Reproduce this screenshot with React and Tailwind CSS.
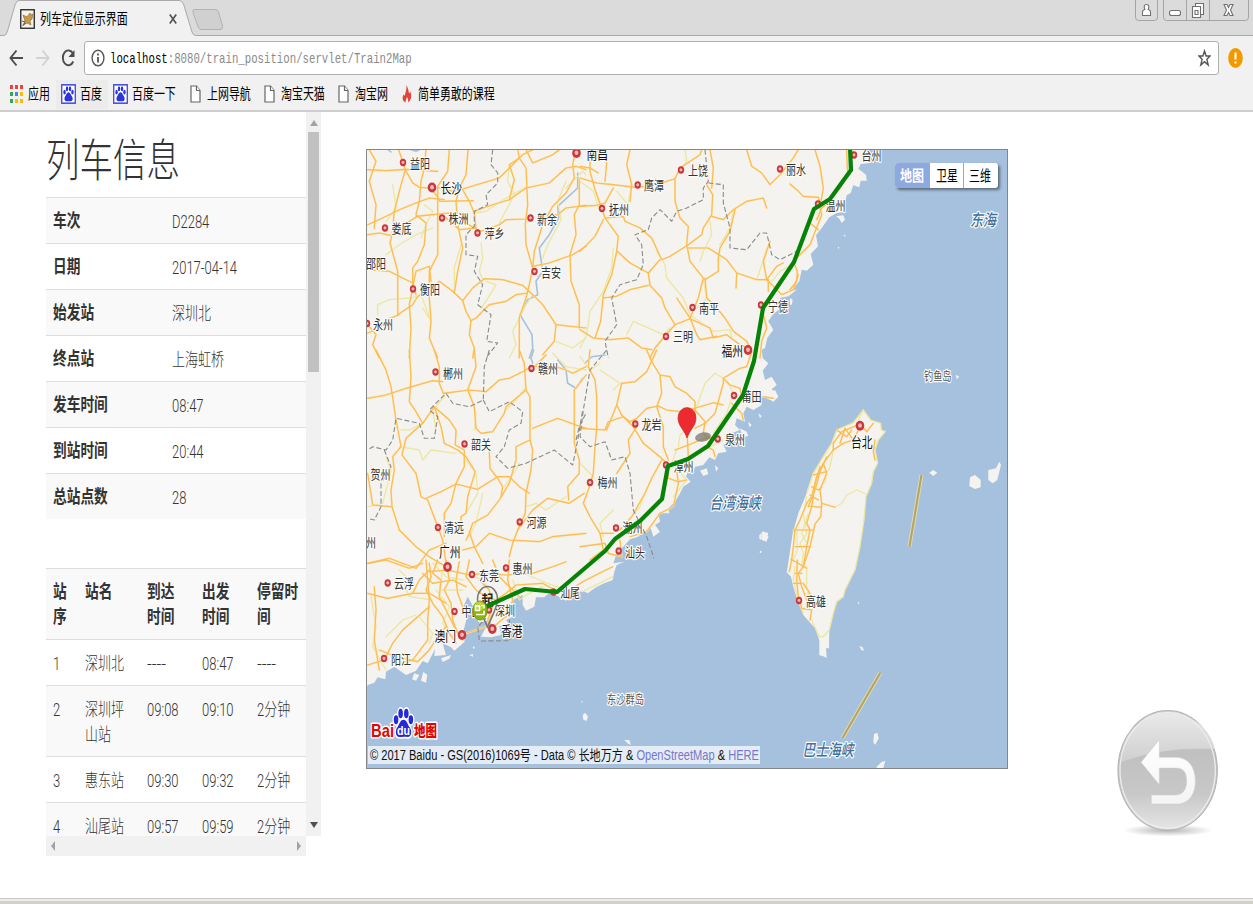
import React from "react";

/* Converts "x,y x,y ..." given in tile units (3 units per pixel) to map pixels. */
const tile = (ox, oy) => (s) =>
  s
    .trim()
    .split(/\s+/)
    .map((p) => {
      const [x, y] = p.split(",").map(Number);
      return `${(ox + x / 3).toFixed(1)},${(oy + y / 3).toFixed(1)}`;
    })
    .join(" ");

const A = tile(366, 148);
const B = tile(580, 148);
const C = tile(790, 148);
const D = tile(366, 350);
const E = tile(580, 350);
const F = tile(366, 560);
const G = tile(660, 400);

const MAINLAND = [
  "366,148",
  C("225,0 240,45 212,48 205,62 228,80 230,98 212,98 208,118 190,112 182,135 170,142 165,165 160,192 140,195 118,208 95,240 78,262 84,295 62,318 70,350 50,368 35,365 28,400 5,428"),
  B("650,425 625,445 600,450 602,480 578,500 565,520 580,545 562,570 555,600"),
  E("545,0 548,25 565,40 548,62 555,90 575,80 590,105 575,118 590,135 570,150 550,138 535,145 545,165 520,180 500,170 490,190 495,215 470,205 465,225 480,240 455,250 445,272 430,285 440,305 415,310 405,330 388,322 370,345 345,350 340,370 325,362 318,380 332,395 310,410 300,430 285,455 265,475 268,490 235,490 240,515 225,525 240,545 220,560 212,535 190,545 175,560 150,568 130,590 110,610 100,640"),
  F("775,5 752,15 745,35 740,60 715,70 690,82 665,100 650,92 630,98 600,122 570,105 550,98 535,112 510,112 505,140 480,152 470,135 470,105 445,118 425,140 440,170 420,180 432,195 400,198 405,225 375,232 345,230 358,205 380,200 370,180 340,188 325,165 322,140 305,110 292,140 302,175 292,215 296,245 265,272 255,262 230,250 240,285 205,288 207,268 185,310 170,303 150,332 120,345 85,320 60,335 58,358 35,352 25,368 5,375"),
  "366,690",
].join(" ");

const TAIWAN = G(
  "610,28 632,60 662,70 664,90 676,95 655,120 645,150 653,190 640,215 635,250 618,290 612,360 600,440 585,510 555,570 550,590 530,605 520,640 508,690 507,745 498,745 500,774 488,768 478,766 478,720 465,685 430,645 412,600 400,560 393,530 380,517 386,480 398,400 415,340 440,280 460,220 490,170 515,130 530,90 580,68"
);

const ISLANDS = [
  G("930,232 945,225 962,240 962,262 945,267 928,258"),
  G("985,210 1008,205 1018,185 1023,195 1012,240 998,250 985,240"),
  G("808,218 820,210 832,218 820,228"),
  G("598,738 608,742 612,752 604,750"),
  G("642,1002 652,998 656,1015 646,1034 640,1028"),
  G("650,1100 665,1085 676,1083 670,1104 650,1104"),
  G("310,392 318,405 326,410 318,424 308,416"),
  G("298,405 305,400 304,420 298,416"),
  G("300,452 305,454 303,460 299,458"),
  G("593,605 598,607 596,614"),
  C("138,205 160,202 165,215 155,225 148,212"),
  C("143,296 148,298 145,304"),
  C("160,262 166,260 166,266"),
  C("0,450 8,455 5,470 0,470"),
  E("560,130 585,120 595,140 580,155 568,148"),
  E("480,235 500,245 505,258 488,262"),
  E("360,362 380,355 385,372 370,378"),
  E("405,345 415,355 408,365"),
  E("545,545 565,548 560,575 545,570"),
  E("535,190 545,198 540,205"),
  E("505,215 515,225 508,232"),
  F("650,465 658,458 666,470 662,482 652,480"),
  F("310,285 322,282 320,290"),
  F("225,295 255,285 250,296 230,306"),
  F("145,340 160,345 150,362 138,358"),
  F("172,335 184,345 180,368 165,362"),
  F("775,540 790,540 795,555 785,550"),
  F("645,423 650,424 648,430"),
  F("320,262 326,258 324,268"),
  C("497,680 508,686 500,694"),
];

const ORANGE = [
  A("5,65 60,68 120,64 215,70"),
  A("98,5 118,65 140,105 160,118 190,120 210,140 222,160 322,158"),
  A("118,65 100,130 85,190 78,260 72,285 95,370 95,500 140,470 155,445 200,420 220,400 260,430 290,458 320,420 355,392 410,395 470,412 500,440 530,470 570,530 660,540"),
  A("180,5 175,60 165,100 160,160 150,200 180,225 175,290 155,340 140,360 140,420 130,470 135,540 130,630"),
  A("250,5 245,70 215,115 215,190 215,320 190,370 190,450 195,520 190,570 215,630"),
  A("306,5 300,80 280,120 270,160 275,230 290,300 275,370 265,435"),
  A("215,118 260,130 300,120 350,105 400,90 440,50 470,20 500,5"),
  A("5,230 50,210 100,185 150,165 190,150 235,155"),
  A("150,205 200,200 250,195 325,240 345,250 400,230 420,215 480,213 490,210"),
  A("290,125 310,160 325,195 330,240 280,245 235,205"),
  A("325,190 380,170 430,155 480,120 550,105 600,60 630,55 660,65"),
  A("455,5 460,30 480,60 485,170 478,230 480,290 500,360 490,410 480,450 460,510 460,630"),
  A("460,30 430,50 445,95 430,155"),
  A("630,0 620,50 625,90 600,135 560,175 530,230 505,310 500,360"),
  A("500,355 550,345 620,320 660,295"),
  A("640,95 640,170 625,200 630,260 612,320 615,400 640,470 640,540"),
  A("530,210 575,200 600,180 660,172"),
  A("5,365 70,370 140,405 150,440"),
  A("5,260 40,255 72,262 110,245 130,220 155,205"),
  A("5,530 30,560 20,590 40,630"),
  A("140,415 150,370 190,355 195,400"),
  A("290,458 300,490 315,518 330,510 370,470 420,460 450,440 485,435"),
  A("315,518 310,560 325,600 320,630"),
  A("5,555 40,540 60,515 100,500"),
  A("10,5 30,40 10,100 30,170 25,240"),
  A("570,530 565,580 530,620"),
  A("480,5 500,45 560,20 580,5"),
  B("0,90 50,105 100,110 165,118 200,115 260,100 285,92 300,60 360,20 365,5"),
  B("30,5 30,70 45,125 65,180 75,210 115,265 110,310 95,380 70,440 62,520 45,570"),
  B("50,5 80,45 75,100"),
  B("150,5 140,50 155,110 150,160"),
  B("285,92 285,160 300,210 325,235 320,290 330,340 370,390 355,450 330,510"),
  B("380,110 398,140 395,200 370,240 365,260 325,290 270,325 245,335 215,270 180,240 135,220 130,205 75,210"),
  B("390,5 400,60 395,120"),
  B("395,205 430,215 460,185 500,160 550,150 560,180"),
  B("500,5 515,55 545,75 570,110 600,80 640,30 655,5"),
  B("465,185 450,250 420,300 415,330 415,370 375,395"),
  B("325,300 385,300 440,335 470,375 530,395 565,395 565,430"),
  B("112,310 150,345 205,375 240,335"),
  B("205,375 210,412 245,450 255,480 285,530 250,570 225,600 210,630"),
  B("0,545 40,570 90,575 145,570 185,600 215,605"),
  B("70,450 110,445 150,425 205,412"),
  B("285,530 330,512 390,540 400,570 440,560 480,590 505,600"),
  B("290,450 330,510 350,560 360,575 410,565"),
  B("375,390 380,450 410,480 435,510 460,550 500,580 510,600"),
  B("0,175 50,172 75,165 100,120"),
  B("570,280 550,340 560,395 575,410 605,440 640,425 655,380"),
  B("470,375 468,420"),
  B("560,395 590,355 610,345"),
  B("0,310 45,265 70,215"),
  B("0,55 30,60 55,75"),
  B("545,480 560,540 545,580 540,630"),
  C("75,5 90,55 100,120 90,180 95,200 60,290 10,340 22,370 20,400 0,425"),
  C("0,108 20,125 40,145 85,148 90,165"),
  C("170,5 172,60 175,80 150,120 115,165 95,180 80,215"),
  C("60,225 85,245"),
  D("30,0 60,60 75,110 90,210 105,290 80,320 85,360 75,420 78,470 100,540 150,590 190,620 240,650"),
  D("5,145 60,135 120,115 200,92 230,95"),
  D("130,0 135,80 130,155 150,185 170,220 120,265 108,315 150,370 165,440 185,450 200,490 230,570 240,640"),
  D("205,0 220,50 220,100 232,130 310,120 360,125 400,90 430,85 470,65 495,50 555,45 600,60 620,70 660,50"),
  D("325,0 330,50 305,120 325,170 330,235 345,250 380,245 415,190 420,170 480,120 475,40 460,0"),
  D("480,120 492,140 492,270 450,290 450,330 430,400 400,450 365,495 320,520 310,550 300,570"),
  D("170,220 205,170 250,210 270,240 268,285 295,300 295,350 270,400 255,460 235,490 235,560"),
  D("205,170 225,230 235,280 275,300 300,320 328,365 305,440 300,490 285,500 285,540"),
  D("180,445 225,425 270,402 335,418 395,380 430,380 460,410 490,430"),
  D("370,305 372,355 395,385 410,410 405,440"),
  D("492,270 500,300 495,360 480,430 478,490 455,540 440,580 430,620"),
  D("500,235 575,205 630,225 660,235"),
  D("625,120 625,280 640,330 640,370 605,410 608,450"),
  D("455,540 500,480 545,445 610,460 655,430"),
  D("290,600 330,590 370,550 430,570 520,575 560,560 660,550"),
  D("5,370 20,465 75,470"),
  D("5,640 70,625 150,655 190,600 240,580"),
  D("310,545 325,590 350,640"),
  D("540,15 510,45"),
  D("660,75 625,120"),
  E("30,0 25,50 45,90 50,140 50,235 45,290 40,370 25,420 10,460 30,500 60,550 100,550"),
  E("0,235 75,240 85,215 130,200 150,215 170,205 200,175 235,168 260,180 300,185 345,175 400,158 430,165"),
  E("230,0 200,65 165,95 125,100 110,165 80,240"),
  E("110,165 125,195 160,230 190,280 245,325 265,345"),
  E("200,0 215,35 240,75 245,130 230,170 250,230 250,290 265,330"),
  E("240,75 270,80 285,110 320,130 345,155 345,180 375,215 370,250 395,270"),
  E("345,175 345,200 330,240 322,260 325,320"),
  E("345,235 375,220 405,190 430,100 430,85 480,55 500,50 515,5"),
  E("430,85 450,105 480,115 485,140"),
  E("285,300 325,285 375,265 410,260"),
  E("245,330 215,385 195,430 155,500 120,540"),
  E("320,390 295,395 265,385 260,350"),
  E("290,360 295,400 280,470 240,490 200,545 150,560"),
  E("0,590 75,580 85,610 125,620 120,570"),
  E("60,550 70,600 30,630"),
  E("455,160 470,175 485,190 490,210"),
  E("550,140 580,145"),
  E("380,290 400,300 405,320"),
  E("170,230 145,270 150,310 110,370"),
  F("5,10 60,0 130,25 170,10"),
  F("180,0 185,60 190,120 185,180 185,240 140,300 100,310"),
  F("5,315 55,300 80,250 110,210 155,170 190,140"),
  F("25,80 30,150 25,240 40,330"),
  F("5,100 65,115 140,100 190,100 240,130"),
  F("190,10 195,50 180,90 200,130 230,170 250,220 270,250"),
  F("215,0 200,40 225,60 220,110 240,150 265,200 290,240"),
  F("240,0 250,60 235,90 255,130 260,180 275,220"),
  F("190,35 245,30 310,45 360,40 420,45 500,40 560,20 600,5"),
  F("280,5 270,60 275,100 290,140"),
  F("310,0 300,50 330,90 360,110 390,120 420,100 450,75 530,70 575,95"),
  F("380,0 400,50 440,90 460,110"),
  F("430,0 425,60 440,120 425,165 395,190 378,205"),
  F("300,220 330,210 360,200 378,165"),
  F("575,95 620,85 650,65 700,40 740,20"),
  F("170,40 200,70 260,60 300,80"),
  F("155,305 190,270 215,230 240,200"),
  F("40,270 90,290 155,305"),
  F("140,100 160,60 190,30"),
  F("340,60 370,90 380,140 365,180"),
  G("600,72 570,85 545,95 520,130 520,150 490,190 470,230 455,290 440,310 420,360 405,390 400,440 395,480 388,515"),
  G("600,80 580,120 550,130 520,150"),
  G("530,90 560,110 575,90"),
  G("540,130 555,85 580,120"),
  G("600,72 620,95 640,70"),
  G("645,120 640,155 645,180"),
  G("490,190 500,220 480,270 485,310 525,322"),
  G("500,170 480,215 465,270 445,320"),
  G("460,225 500,215"),
  G("455,260 475,270 485,262"),
  G("450,285 475,300"),
  G("445,318 485,322"),
  G("480,200 465,250 455,320 440,370 450,390 440,440 430,500 415,520 425,560 440,600"),
  G("485,310 482,350 465,372 450,440 430,500"),
  G("400,390 460,390"),
  G("405,440 450,440"),
  G("393,478 440,505"),
  G("405,520 425,520"),
  G("412,480 410,540 415,590"),
  G("418,600 425,625 455,630 450,660"),
  G("400,550 425,550"),
  G("430,550 450,580 440,600"),
];

const YELLOW = [
  A("60,320 100,290 150,260 200,240"),
  A("35,500 35,470 70,455 130,450 200,440"),
  A("175,170 200,190 180,230 165,270"),
  A("265,430 265,360 285,290"),
  A("345,285 350,330 340,370 350,395"),
  A("360,400 390,410 360,460 345,480"),
  A("325,195 360,190 420,150 485,115"),
  A("600,120 650,70 660,80"),
  A("500,440 480,470 440,550 450,590 430,630"),
  A("600,100 575,160 585,215 545,290 530,330"),
  A("165,440 195,520 170,480"),
  A("80,110 90,180 60,220"),
  A("570,580 620,600 660,570"),
  A("430,50 425,100 445,140 400,225"),
  B("0,100 40,130 60,190"),
  B("100,300 95,360 70,430 30,490 20,560 0,600"),
  B("230,310 255,350 260,390 310,450 330,500 400,550 450,545 455,570"),
  B("390,220 395,260 370,310 360,340"),
  B("155,100 145,170 110,130"),
  B("460,190 450,240 420,290"),
  B("315,5 320,40 290,80"),
  B("530,395 545,350 560,300"),
  B("370,395 380,450 350,480"),
  B("575,400 600,370 640,350 650,320"),
  B("140,560 160,520 250,560 270,540"),
  D("100,290 160,300 170,330 195,300 270,310"),
  D("300,490 335,430 330,370 300,330"),
  D("105,240 130,240 170,220"),
  D("60,320 75,360 65,400 50,460 5,470"),
  D("235,140 200,180 210,240"),
  D("415,410 450,360 460,340"),
  D("480,470 510,460 540,480 600,440"),
  D("350,430 330,520 310,560"),
  D("560,10 600,50 660,60"),
  D("420,180 450,150 480,110"),
  D("310,120 330,190 325,240"),
  E("0,20 30,60 60,40"),
  E("60,60 120,100 100,120"),
  E("350,170 375,100 405,70 430,85"),
  E("295,290 300,255 330,230"),
  E("0,340 40,380"),
  E("290,300 275,340 320,390 280,440"),
  E("370,250 390,290 430,270"),
  E("195,430 180,470 130,530"),
  E("100,480 60,520 70,560"),
  E("440,90 460,130 440,190 400,250"),
  F("15,110 30,200 20,260 60,330"),
  F("100,30 150,80 130,110"),
  F("110,60 130,110 200,120"),
  F("200,10 240,50 290,60"),
  F("210,90 250,140 230,190 260,230"),
  F("300,40 350,60 380,110"),
  F("440,60 460,120 490,100 530,80"),
  F("160,170 200,220 190,250"),
  F("450,30 520,60 570,80 650,95 740,50"),
  F("60,230 110,180 150,165"),
  F("230,30 220,90 290,90"),
  G("610,30 595,60 600,72"),
  G("610,30 632,60 662,70 664,90 676,95 655,120 645,150 653,190 640,215 635,250 618,290 612,360 600,440 585,510 555,570 550,590 530,605 520,640 508,690 490,710 478,710 455,660"),
  G("610,30 580,68 530,90 515,130 490,170 460,220 440,280"),
  G("525,322 545,310 560,285 590,270 618,282"),
  G("520,150 510,200 500,220 495,250"),
  G("440,290 430,340 440,400 420,430 430,460 425,500"),
  G("440,500 440,560 450,600 440,620"),
  G("405,500 400,540 412,590 430,640"),
  G("410,380 412,450 400,480"),
  G("445,340 425,400 440,430"),
];

const BORDERS = [
  A("380,5 375,50 395,75 395,105 360,140 365,170 325,190 325,235 300,260 300,320 335,325 325,370 350,410 335,470 375,500 362,580 395,585 360,630"),
  D("370,0 355,50 352,150 310,170 260,160 240,130 190,180 215,200 205,265 175,265 160,220 90,205 80,270 60,300 20,290 5,300"),
  D("55,300 75,350 45,400 45,470 25,510 5,505"),
  D("352,150 370,185 430,155 470,185 465,220 430,240 415,290 390,320 425,355 480,340 565,300 620,345 635,270 650,180"),
  B("375,5 385,100 370,120 370,155 320,180 290,190 275,220 240,185 215,210 205,245 165,260 185,290 190,350 170,395 120,410 95,450 110,530 75,580 85,630"),
  B("385,105 430,110 430,165 450,240 450,300 500,305 540,255 560,255 575,320 600,335 650,310"),
  E("80,0 30,60 15,150 10,180 0,260 30,290 75,275 95,330 135,320 150,370 160,480 200,560 222,625"),
  F("340,240 335,200 360,175"),
  F("345,243 432,242 430,165"),
  D("630,270 640,230 660,190"),
];

const RIVERS = [
  A("635,75 635,120 575,175 578,210 550,260 520,300 530,370 510,400 515,440 485,455 462,500 498,560 500,600 490,630"),
  D("503,0 495,25 500,40"),
  D("575,30 600,60 605,100 630,115 650,85"),
  E("15,40 35,20 75,15"),
  A("60,0 75,12"),
  A("120,0 150,10 170,0"),
];

const CITIES = [
  ["益阳", 410, 164, 403, 162.5],
  ["娄底", 391.5, 229, 385, 228],
  ["株洲", 448.5, 218.5, 442, 218],
  ["萍乡", 484.5, 234, 477.5, 233],
  ["新余", 537, 220, 530.5, 218],
  ["吉安", 541, 273, 534.5, 271.5],
  ["衡阳", 420, 289.5, 413, 289],
  ["永州", 373, 325, 367, 323.5],
  ["鹰潭", 644, 186, 637.7, 185],
  ["上饶", 688, 171, 681, 170],
  ["抚州", 609, 210, 602, 208.5],
  ["丽水", 786, 170, 780, 169],
  ["台州", 861.5, 156, 854, 155],
  ["温州", 825.5, 206, 818, 204],
  ["南平", 699, 309, 692.5, 307.5],
  ["三明", 673, 337, 666, 336.5],
  ["宁德", 768, 307, 761, 305],
  ["郴州", 443, 373.5, 435.5, 372],
  ["赣州", 538, 369, 531.5, 368.5],
  ["韶关", 471, 445, 464.5, 444],
  ["贺州", 370.5, 475, 0, 0],
  ["清远", 444, 528, 438, 527.5],
  ["河源", 526.5, 523, 519.7, 522],
  ["惠州", 512.5, 569, 506, 568],
  ["东莞", 479, 576, 472, 574.5],
  ["云浮", 394, 584, 387.7, 583],
  ["龙岩", 641.5, 425, 635.3, 424],
  ["莆田", 741.5, 397, 734, 395.5],
  ["泉州", 725, 440, 717.7, 439],
  ["漳州", 673.5, 467, 666, 465],
  ["梅州", 597.5, 483, 590, 482.5],
  ["潮州", 622.5, 528, 616, 528],
  ["汕头", 625, 552.5, 618.7, 551],
  ["汕尾", 560, 593, 553.5, 592],
  ["深圳", 495, 610.5, 489, 610],
  ["中山", 461.5, 612, 454.5, 611.5],
  ["阳江", 391, 660, 384, 658.5],
  ["高雄", 806, 602, 799, 600.5],
  ["邵阳", 366, 263.5, 0, 0],
];

const CAPITALS = [
  ["长沙", 440.5, 188.5, 432, 187.5],
  ["南昌", 586.5, 154.5, 576.5, 153],
  ["福州", 721.5, 351, 748, 350],
  ["广州", 439, 552.5, 447.5, 567],
  ["香港", 501, 631, 492.3, 629],
  ["澳门", 434.5, 636.5, 462, 635],
  ["台北", 851, 442, 860, 425.7],
];

const SEAS = [
  ["东海", 970, 220, 26],
  ["台湾海峡", 709.5, 502.5, 51],
  ["巴士海峡", 802.5, 750, 51],
];

const Dot = ({ x, y, r }) => (
  <g>
    <ellipse cx={x} cy={y} rx={r} ry={r * 1.15} fill="#c8383e" />
    <ellipse cx={x} cy={y - 0.2} rx={r * 0.45} ry={r * 0.52} fill="#f0b9b4" />
  </g>
);

const Lines = ({ list, ...rest }) => (
  <g fill="none" strokeLinejoin="round" strokeLinecap="round" {...rest}>
    {list.map((p, i) => (
      <polyline key={i} points={p} />
    ))}
  </g>
);

function Paw({ fill }) {
  return (
    <g fill={fill}>
      <ellipse cx="4" cy="9" rx="2" ry="2.8" />
      <ellipse cx="8" cy="5" rx="2" ry="3" />
      <ellipse cx="13" cy="5" rx="2" ry="3" />
      <ellipse cx="17" cy="9" rx="2" ry="2.8" />
      <path d="M10.500 9c-3 0-3.500 3-5.500 5s-1.500 6 2 6c2 0 5-.5 7 0 4 0 4-4 2-6s-2.500-5-5.500-5z" />
    </g>
  );
}

function MapView() {
  return (
    <svg
      className="block h-full w-full"
      viewBox="367 150 640 618"
      preserveAspectRatio="none"
      fontFamily='"Noto Sans CJK SC", sans-serif'
    >
      <rect x="360" y="140" width="660" height="640" fill="#a6c1de" />
      <polygon points={MAINLAND} fill="#f4f3ef" />
      <polygon points={TAIWAN} fill="#f4f3ef" />
      {ISLANDS.map((p, i) => (
        <polygon key={i} points={p} fill="#f4f3ef" />
      ))}
      <Lines list={RIVERS} stroke="#a6c1de" strokeWidth="1.600" />
      <Lines list={YELLOW} stroke="#ece7a0" strokeWidth="1.300" />
      <Lines list={ORANGE} stroke="#fde3b0" strokeWidth="1.900" />
      <Lines list={ORANGE} stroke="#fdbc4f" strokeWidth="1.200" />
      <Lines list={BORDERS} stroke="#8a8a8a" strokeWidth="1.100" strokeDasharray="5 2.500" strokeLinecap="butt" />

      {[
        [921.5, 475, 909.5, 546.5],
        [880.5, 672.5, 842.5, 738],
      ].map(([a, b, c, d]) => (
        <g key={a}>
          <line x1={a} y1={b} x2={c} y2={d} stroke="#dedcb0" strokeWidth="4" />
          <line x1={a} y1={b} x2={c} y2={d} stroke="#b5a264" strokeWidth="2" />
        </g>
      ))}

      <g paintOrder="stroke" stroke="#fbfbf9" strokeWidth="2.500" strokeLinejoin="round">
        {CITIES.map(([t, x, y]) => (
          <text key={t} x={x} y={y + 4.3} fontSize="13" textLength="20" lengthAdjust="spacingAndGlyphs" fill="#333333">
            {t}
          </text>
        ))}
        <text x="366" y="546.500" fontSize="13" textLength="10" lengthAdjust="spacingAndGlyphs" fill="#333333">州</text>
        {CAPITALS.map(([t, x, y]) => (
          <text key={t} x={x} y={y + 4.7} fontSize="14" textLength="21.500" lengthAdjust="spacingAndGlyphs" fill="#111111">
            {t}
          </text>
        ))}
        <text x="924" y="381" fontSize="12" textLength="27.500" lengthAdjust="spacingAndGlyphs" fill="#555555">钓鱼岛</text>
        <text x="607" y="703.500" fontSize="12" textLength="37" lengthAdjust="spacingAndGlyphs" fill="#555555">东沙群岛</text>
        {SEAS.map(([t, x, y, w]) => (
          <text key={t} x={x} y={y + 6} fontSize="16.500" fontWeight="500" fontStyle="italic" textLength={w} lengthAdjust="spacingAndGlyphs" fill="#41729f">
            {t}
          </text>
        ))}
      </g>
      {CITIES.map(([t, , , x, y]) => (x ? <Dot key={t} x={x} y={y} r={3.2} /> : null))}
      {CAPITALS.map(([t, , , x, y]) => (
        <Dot key={t} x={x} y={y} r={4.3} />
      ))}

      <path
        d="M487.500 627C484 618 477.500 608 477.500 599A10 12.500 0 0 1 497.500 599C497.500 608 491 618 487.500 627z"
        fill="none"
        stroke="#777777"
        strokeWidth="1.500"
      />
      <text x="481.500" y="605" fontSize="14" fontWeight="700" textLength="12" lengthAdjust="spacingAndGlyphs" fill="#222222">起</text>

      <ellipse cx="703" cy="437" rx="8" ry="4.500" fill="#77766f" opacity=".75" transform="rotate(-12 703 437)" />
      <polyline
        points="850,148 851,170 830,199 814,209 794,262 763,308 754,361 743,395 708,446 688,459 668,466 662,499 640,521 615,539 605,551 557,592 525,589 485,607"
        fill="none"
        stroke="#068206"
        strokeWidth="4.200"
        strokeLinejoin="round"
      />
      <path d="M687 438C684.500 430 678 426 678 418A9 10.500 0 0 1 696 418C696 426 689.500 430 687 438z" fill="#ec2b30" stroke="#c91f25" strokeWidth=".6" />

      <ellipse cx="480" cy="610.500" rx="7.200" ry="9.500" fill="#8db600" stroke="#74970a" />
      <ellipse cx="479.500" cy="606" rx="5" ry="4.500" fill="#b5d53c" />
      <path d="M475.500 606h4v4.500h-4zM481 605.500h3v3M476 614.500h8v-4" fill="none" stroke="#fff" strokeWidth="1.600" />

      <g paintOrder="stroke" stroke="#ffffff" strokeWidth="3" strokeLinejoin="round">
        <text x="371" y="736.500" fontFamily='"Liberation Sans", sans-serif' fontSize="19" fontWeight="700" textLength="23" lengthAdjust="spacingAndGlyphs" fill="#e10601">Bai</text>
        <text x="414" y="735.500" fontSize="15" fontWeight="900" textLength="23" lengthAdjust="spacingAndGlyphs" fill="#e10601">地图</text>
      </g>
      <g transform="translate(391.500 705.500) scale(1.140 1.580)">
        <g stroke="#fff" strokeWidth="2.200">
          <Paw fill="#fff" />
        </g>
        <Paw fill="#2529d8" />
      </g>
      <text x="397" y="735" fontFamily='"Liberation Sans", sans-serif' fontSize="13" fontWeight="700" textLength="13" lengthAdjust="spacingAndGlyphs" fill="#fff">du</text>

      <rect x="368" y="746" width="392" height="18" fill="#ffffff" opacity=".7" />
      <text
        x="370"
        y="760"
        textLength="389"
        lengthAdjust="spacingAndGlyphs"
        fontFamily='"Liberation Sans", "Noto Sans CJK SC", sans-serif'
        fontSize="14"
        fill="#111111"
      >
        © 2017 Baidu - GS(2016)1069号 - Data © 长地万方 &amp; <tspan fill="#7777cc">OpenStreetMap</tspan> &amp; <tspan fill="#7777cc">HERE</tspan>
      </text>
    </svg>
  );
}

/* Condensed text: the inner span is drawn narrower than its natural width. */
const Slim = ({ children, className = "scale-x-[.73]" }) => (
  <span className={`block origin-left whitespace-nowrap ${className}`}>{children}</span>
);

const INFO = [
  ["车次", "D2284"],
  ["日期", "2017-04-14"],
  ["始发站", "深圳北"],
  ["终点站", "上海虹桥"],
  ["发车时间", "08:47"],
  ["到站时间", "20:44"],
  ["总站点数", "28"],
];

const STOPS = [
  [["1"], ["深圳北"], ["----"], ["08:47"], ["----"]],
  [["2"], ["深圳坪", "山站"], ["09:08"], ["09:10"], ["2分钟"]],
  [["3"], ["惠东站"], ["09:30"], ["09:32"], ["2分钟"]],
  [["4"], ["汕尾站"], ["09:57"], ["09:59"], ["2分钟"]],
];

const HEAD = [["站", "序"], ["站名"], ["到达", "时间"], ["出发", "时间"], ["停留时", "间"]];

const StopRow = ({ cells, bold, shaded }) => (
  <div
    className={`grid shrink-0 grid-cols-[32px_62px_55px_55px_49px] border-t border-[#dddddd] pb-[9px] pl-[7px] pt-[11px] ${
      shaded ? "bg-[#f9f9f9]" : "bg-white"
    } ${bold ? "font-bold" : "font-['Roboto','Noto_Sans_CJK_SC',sans-serif] font-light"}`}
  >
    {cells.map((lines, i) => (
      <div key={i}>
        {lines.map((l) => (
          <Slim key={l} className={bold ? "scale-x-[.77]" : l === "----" ? "scale-x-[.94]" : "scale-x-[.73]"}>
            {l}
          </Slim>
        ))}
      </div>
    ))}
  </div>
);

const BaiduIcon = () => (
  <svg className="h-[20px] w-[15px] shrink-0" viewBox="0 0 21 24" preserveAspectRatio="none">
    <rect x="1" y="1" width="19" height="22" fill="#fff" stroke="#3c45e0" strokeWidth="1.800" />
    <g transform="translate(1.600 .8) scale(.85 1)">
      <Paw fill="#2b35dd" />
    </g>
  </svg>
);

const PageIcon = () => (
  <svg className="h-[18px] w-[11px] shrink-0" viewBox="0 0 11 18" fill="#fff" stroke="#666" strokeWidth="1.200">
    <path d="M1 1h5.500L10 5.500V17H1z" />
    <path d="M6.500 1v4.500H10" />
  </svg>
);

const APPS = ["#e8453c", "#e8453c", "#e8453c", "#34a853", "#4285f4", "#fbbc05", "#34a853", "#fbbc05", "#fbbc05"];

function Chrome() {
  return (
    <header className="shrink-0 bg-[#f1f1f1] text-[15px] text-black">
      <div className="relative flex h-[36px] bg-[#dbdbdb]">
        <svg className="absolute inset-0 h-[36px] w-[1253px]" viewBox="0 0 1253 36">
          <path d="M0 36V35.500H4Q6.500 35 7.500 31L15 5Q16.500.5 19 .5H179Q182 .5 183.500 4L192 32Q193 35.500 196 35.500H1253V36z" fill="#f1f1f1" />
          <path d="M0 35.500H4Q6.500 35 7.500 31L15 5Q16.500.5 19 .5H179Q182 .5 183.500 4L192 32Q193 35.500 196 35.500H1253" fill="none" stroke="#a9a9a9" />
          <path d="M194 9.500h22q1.500 0 2.500 2.500l4 14q.5 3.500-1.500 3.500h-20q-2 0-3-3l-5-14q-.5-3 1-3z" fill="#d0d0d0" stroke="#b2b2b2" />
          <g fill="none" stroke="#a5a5a5">
            <path d="M1135.500 0v17q0 3.500 3 3.500h16q3 0 3-3.500V0M1163.500 0v17q0 3.500 3 3.500h79q3 0 3-3.500V0M1186.500 0v20M1209.500 0v20" />
          </g>
          <g fill="#fff" stroke="#707070" strokeWidth="1.100">
            <path d="M1142.500 15.500v-3.500q0-2 2.300-2.500-1.800-5 1.700-5t1.700 5q2.300.5 2.300 2.500v3.500z" />
            <rect x="1169.500" y="10.500" width="11" height="5" rx="2" />
            <path d="M1195.500 3.500h8v11h-8z" />
            <path d="M1192.500 6.500h8v11h-8z" />
            <path d="M1195 10.500h3v4h-3z" />
            <path d="M1224 4.500h3l1.500 3 1.500-3h3l-2.500 5.500 2.500 5.500h-3l-1.500-3-1.500 3h-3l2.500-5.500z" />
          </g>
        </svg>
        <div className="relative flex h-[36px] items-center pl-[20px] pt-[1px]">
          <svg className="h-[20px] w-[15px]" viewBox="0 0 15 20">
            <rect x=".75" y=".75" width="13.500" height="18.500" fill="#f4f2ea" stroke="#222" strokeWidth="1.300" />
            <path d="M3 6l4 2 3-4 1 2 2-1-1 5-2 2 1 4-4-2-4 2 2-4z" fill="#c99a43" stroke="#7b6a41" strokeWidth=".6" />
            <path d="M2.500 17l3-3M2 12l3 1" stroke="#333" strokeWidth=".8" />
          </svg>
          <div className="ml-[5px] w-[129px] pt-[1px]">
            <Slim>列车定位显示界面</Slim>
          </div>
          <svg className="h-[12px] w-[8px]" viewBox="0 0 8 12" stroke="#555" strokeWidth="1.700">
            <path d="M.8 1.500l6.400 9M7.200 1.500l-6.400 9" />
          </svg>
        </div>
      </div>

      <div className="flex h-[42px] items-center pt-[2px]">
        <svg className="ml-[8px] h-[26px] w-[72px] shrink-0" viewBox="0 0 72 26" fill="none" strokeWidth="1.900">
          <path d="M15 13H3M8.500 5.500L2.500 13l6 7.500" stroke="#4d4d4d" />
          <path d="M28 13h12M34.500 5.500l6 7.500-6 7.500" stroke="#d2d2d2" />
          <path d="M65 8.500A5.600 7.400 0 1 0 65.300 16.500" stroke="#4d4d4d" />
          <path d="M66.500 5v7h-6z" fill="#4d4d4d" />
        </svg>
        <div className="ml-[4px] flex h-[34px] w-[1135px] shrink-0 items-center rounded-[3px] border border-[#b0b0b0] bg-white">
          <svg className="ml-[6px] h-[18px] w-[14px]" viewBox="0 0 14 18" fill="none" stroke="#555" strokeWidth="1.400">
            <ellipse cx="7" cy="9" rx="5.900" ry="7.800" />
            <path d="M7 8v5.500M7 4.500v2" strokeWidth="1.800" />
          </svg>
          <div className="ml-[5px] h-[20px] w-[1088px] pt-[2px] font-['Liberation_Mono',monospace] text-[15px] leading-[20px] text-[#8a8a8a]">
            <Slim className="scale-x-[.713]">
              <span className="text-black">localhost</span>:8080/train_position/servlet/Train2Map
            </Slim>
          </div>
          <svg className="h-[18px] w-[13px]" viewBox="0 0 13 18" fill="none" stroke="#555" strokeWidth="1.400">
            <path d="M6.500 2l1.600 5H12L8.900 10.300 10.200 16 6.500 12.700 2.800 16l1.300-5.700L1 7h3.900z" />
          </svg>
        </div>
        <svg className="ml-[9px] h-[20px] w-[15px]" viewBox="0 0 15 20">
          <ellipse cx="7.500" cy="10" rx="7.300" ry="10" fill="#f29900" />
          <path d="M7.500 4.500v7M7.500 13.500v2" stroke="#fff" strokeWidth="2" />
        </svg>
      </div>

      <div className="flex h-[34px] items-center border-b-2 border-[#cdcdcd] pl-[10px]">
        <div className="grid grid-cols-3 gap-x-[2px] gap-y-[3px]">
          {APPS.map((c, i) => (
            <span key={i} className="h-[4px] w-[3px]" style={{ background: c }} />
          ))}
        </div>
        <div className="ml-[5px] w-[28px]"><Slim>应用</Slim></div>
        <div className="flex h-[29px] w-[52px] items-center gap-[4px] bg-[#ececec] pl-[5px]">
          <BaiduIcon />
          <Slim>百度</Slim>
        </div>
        <div className="ml-[5px] flex w-[77px] items-center gap-[4px]"><BaiduIcon /><Slim>百度一下</Slim></div>
        <div className="flex w-[74px] items-center gap-[6px]"><PageIcon /><Slim>上网导航</Slim></div>
        <div className="flex w-[74px] items-center gap-[6px]"><PageIcon /><Slim>淘宝天猫</Slim></div>
        <div className="flex w-[64px] items-center gap-[6px]"><PageIcon /><Slim>淘宝网</Slim></div>
        <svg className="h-[18px] w-[10px]" viewBox="0 0 10 18">
          <path d="M4.500 0C6 3.500 6.500 5 7 8.500 7.600 7.800 8 7.200 8.200 6.500 10 10 9.500 15.500 6 17.500 6.600 15 6 13.500 5 12 4.600 14 3.300 15 3.600 17.500 0 16 .2 12 1.500 9.500 2 10.200 2.200 10.600 2.600 11 3.600 7.500 4.800 4 4.500 0z" fill="#e2443c" />
        </svg>
        <div className="ml-[6px]"><Slim>简单勇敢的课程</Slim></div>
      </div>
    </header>
  );
}

function Sidebar() {
  return (
    <div className="ml-[46px] w-[275px] shrink-0">
      <div className="flex h-[724px]">
        <div className="flex h-full w-[260px] flex-col overflow-hidden text-[17.800px] leading-[25px] text-[#333333]">
          <h1 className="h-[85px] shrink-0 pt-[26px] text-[45px] font-light leading-[48px]">
            <Slim className="scale-x-[.745]">列车信息</Slim>
          </h1>
          {INFO.map(([k, v], i) => (
            <div
              key={k}
              className={`flex shrink-0 border-t border-[#dddddd] pb-[9px] pl-[7px] pt-[11px] ${i % 2 ? "bg-white" : "bg-[#f9f9f9]"}`}
            >
              <div className="w-[119px] font-bold"><Slim className="scale-x-[.77]">{k}</Slim></div>
              <div className="font-['Roboto','Noto_Sans_CJK_SC',sans-serif] font-light"><Slim>{v}</Slim></div>
            </div>
          ))}
          <div className="h-[49px] shrink-0" />
          <StopRow cells={HEAD} bold shaded />
          {STOPS.map((s, i) => (
            <StopRow key={i} cells={s} shaded={i % 2 === 1} />
          ))}
        </div>
        <div className="flex w-[15px] flex-col items-center bg-[#f1f1f1] pb-[8px] pt-[8px]">
          <svg className="h-[6px] w-[8px]" viewBox="0 0 8 6"><path d="M4 0l4 6H0z" fill="#a3a3a3" /></svg>
          <div className="mt-[6px] h-[240px] w-[11px] bg-[#c1c1c1]" />
          <svg className="mt-auto h-[6px] w-[8px]" viewBox="0 0 8 6"><path d="M0 0h8L4 6z" fill="#505050" /></svg>
        </div>
      </div>
      <div className="flex h-[20px] w-[260px] items-center justify-between bg-[#f1f1f1] px-[5px]">
        <svg className="h-[10px] w-[4px]" viewBox="0 0 4 10"><path d="M4 0v10L0 5z" fill="#a3a3a3" /></svg>
        <svg className="h-[10px] w-[4px]" viewBox="0 0 4 10"><path d="M0 0v10l4-5z" fill="#a3a3a3" /></svg>
      </div>
    </div>
  );
}

const ReturnButton = () => (
  <button className="block h-[134px] w-[112px]" aria-label="返回">
    <svg className="h-full w-full" viewBox="0 0 336 402">
      <defs>
        <linearGradient id="disc" x1="0" y1="0" x2="0" y2="1">
          <stop offset="0" stopColor="#dadada" />
          <stop offset=".35" stopColor="#c0c0c0" />
          <stop offset=".7" stopColor="#c8c8c8" />
          <stop offset="1" stopColor="#e6e6e6" />
        </linearGradient>
        <linearGradient id="gloss" x1="0" y1="0" x2="0" y2="1">
          <stop offset="0" stopColor="#e9e9e9" />
          <stop offset="1" stopColor="#cfcfcf" />
        </linearGradient>
        <radialGradient id="shade">
          <stop offset="0" stopColor="#000" stopOpacity=".3" />
          <stop offset="1" stopColor="#000" stopOpacity="0" />
        </radialGradient>
        <linearGradient id="arrow" x1="0" y1="0" x2="0" y2="1">
          <stop offset="0" stopColor="#fff" />
          <stop offset="1" stopColor="#f4f4f4" />
        </linearGradient>
      </defs>
      <ellipse cx="168" cy="370" rx="135" ry="18" fill="url(#shade)" />
      <ellipse cx="167" cy="190" rx="149" ry="179" fill="url(#disc)" stroke="#b6b6b6" strokeWidth="3.500" />
      <path d="M26 165C27 80 92 19 167 19S298 70 308 126Q160 118 26 165z" fill="url(#gloss)" />
      <ellipse cx="167" cy="190" rx="143" ry="173" fill="none" stroke="#ececec" strokeWidth="4" />
      <path d="M87 166L142 98V151H190C230 151 250 182 250 222C250 262 230 291 196 291H118V264H190C214 264 224 246 224 222C224 196 214 183 190 183H142V233z" fill="url(#arrow)" stroke="#cccccc" strokeWidth="1.500" />
    </svg>
  </button>
);

export default function App() {
  return (
    <div className="flex h-[904px] w-[1253px] flex-col overflow-hidden bg-white font-['Liberation_Sans','Noto_Sans_CJK_SC',sans-serif]">
      <Chrome />
      <main className="flex h-[786px] shrink-0">
        <Sidebar />
        <div className="relative ml-[45px] mt-[37px] h-[620px] w-[642px] shrink-0 border border-[#858585]">
          <MapView />
          <div className="absolute right-[9px] top-[13px] flex h-[25px] w-[103px] rounded-[3px] bg-white text-[15px] leading-[26px] text-black shadow-[2px_2px_3px_rgba(0,0,0,.45)]">
            <div className="w-[35px] rounded-l-[3px] bg-[#8ea8e0] pl-[5px] font-bold text-white"><Slim className="scale-x-[.8]">地图</Slim></div>
            <div className="w-[34px] border-r border-[#8ea8e0] pl-[6px]"><Slim>卫星</Slim></div>
            <div className="pl-[5px]"><Slim>三维</Slim></div>
          </div>
        </div>
        <div className="ml-[104px] mt-[595px]">
          <ReturnButton />
        </div>
      </main>
      <footer className="h-[6px] shrink-0 border-t border-[#c9c9c9] bg-[#eeece8] pt-[2px]">
        <div className="h-[3px] bg-[#d5d0c7]" />
      </footer>
    </div>
  );
}
